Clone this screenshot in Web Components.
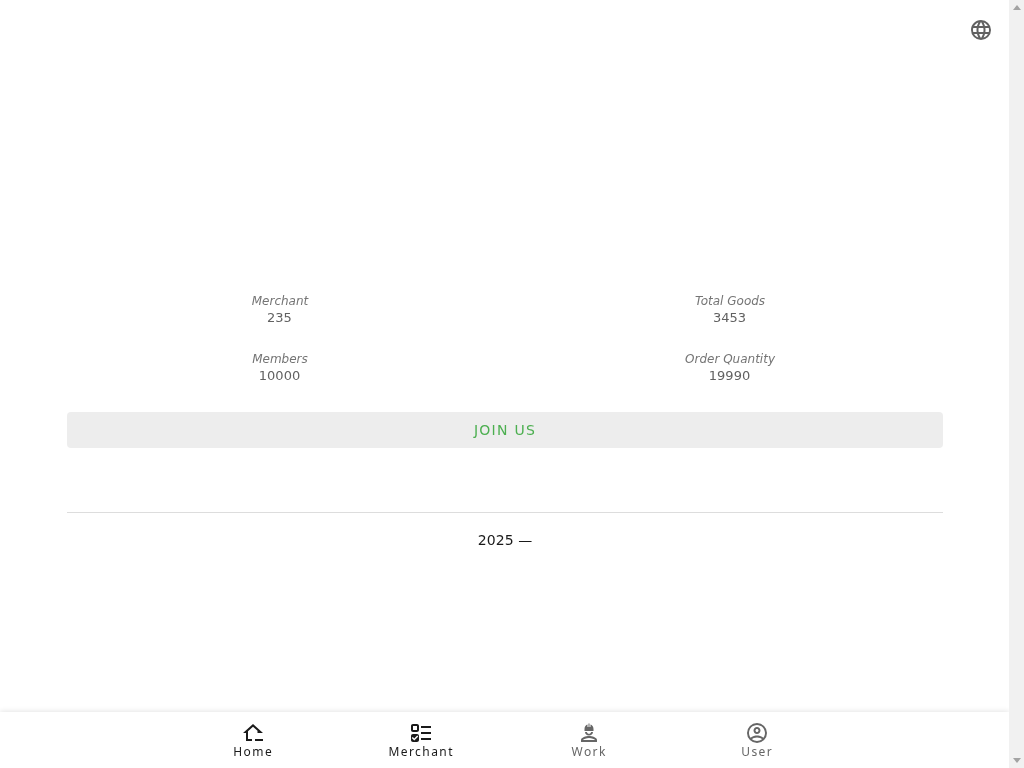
<!DOCTYPE html>
<html lang="en">
<head>
<meta charset="utf-8">
<title>Home</title>
<style>
    html { overflow: hidden; }
    body {
        margin: 0;
        padding-right: 15px;
        background: #fff;
        font-family: "DejaVu Sans", sans-serif;
    }
</style>
</head>
<body>
<home-page></home-page>
<bottom-nav></bottom-nav>
<scroll-rail></scroll-rail>

<script>
const ICONS = {
    web: "M16.36,14C16.44,13.34 16.5,12.68 16.5,12C16.5,11.32 16.44,10.66 16.36,10H19.74C19.9,10.64 20,11.31 20,12C20,12.69 19.9,13.36 19.74,14M14.59,19.56C15.19,18.45 15.65,17.25 15.97,16H18.92C17.96,17.65 16.43,18.93 14.59,19.56M14.34,14H9.66C9.56,13.34 9.5,12.68 9.5,12C9.5,11.32 9.56,10.65 9.66,10H14.34C14.43,10.65 14.5,11.32 14.5,12C14.5,12.68 14.43,13.34 14.34,14M12,19.96C11.17,18.76 10.5,17.43 10.09,16H13.91C13.5,17.43 12.83,18.76 12,19.96M8,8H5.08C6.03,6.34 7.57,5.06 9.4,4.44C8.8,5.55 8.35,6.75 8,8M5.08,16H8C8.35,17.25 8.8,18.45 9.4,19.56C7.57,18.93 6.03,17.65 5.08,16M4.26,14C4.1,13.36 4,12.69 4,12C4,11.31 4.1,10.64 4.26,10H7.64C7.56,10.66 7.5,11.32 7.5,12C7.5,12.68 7.56,13.34 7.64,14M12,4.03C12.83,5.23 13.5,6.57 13.91,8H10.09C10.5,6.57 11.17,5.23 12,4.03M18.92,8H15.97C15.65,6.75 15.19,5.55 14.59,4.44C16.43,5.07 17.96,6.34 18.92,8M12,2C6.47,2 2,6.5 2,12A10,10 0 0,0 12,22A10,10 0 0,0 22,12A10,10 0 0,0 12,2Z",
    home: "M12 3L2 12H5V20H11V18H7V10.19L12 5.69L16.5 9.74V12H22ZM14 18V20H22V18Z",
    merchant: "M4 13C2.89 13 2 13.89 2 15V19C2 20.11 2.89 21 4 21H8C9.11 21 10 20.11 10 19V15C10 13.89 9.11 13 8 13M8.2 14.5L9.26 15.55L5.27 19.5L2.74 16.95L3.81 15.9L5.28 17.39M4 3C2.89 3 2 3.89 2 5V9C2 10.11 2.89 11 4 11H8C9.11 11 10 10.11 10 9V5C10 3.89 9.11 3 8 3M4 5H8V9H4M12 5H22V7H12M12 19V17H22V19M12 11H22V13H12Z",
    work: "M12 15C9 15 4 16.5 4 19V21H20V19C20 16.5 15 15 12 15ZM12 17C14.5 17 17.5 18 18 19H6C6.5 18 9.5 17 12 17ZM8 11H10C10 12 10.9 12.8 12 12.8S14 12 14 11H16C16 13 14.2 14.5 12 14.5S8 13 8 11ZM7.5 10V8C7.5 5.5 9 4 10.5 3.5V6H11.5V2.5H12.5V6H13.5V3.5C15 4 16.5 5.5 16.5 8V10Z",
    user: "M12 2A10 10 0 0 0 2 12A10 10 0 0 0 12 22A10 10 0 0 0 22 12A10 10 0 0 0 12 2ZM7.07 18.28C7.5 17.38 10.12 16.5 12 16.5S16.5 17.38 16.93 18.28C15.57 19.36 13.86 20 12 20S8.43 19.36 7.07 18.28ZM18.36 16.83C16.93 15.09 13.46 14.5 12 14.5S7.07 15.09 5.64 16.83C4.62 15.5 4 13.82 4 12C4 7.59 7.59 4 12 4S20 7.59 20 12C20 13.82 19.38 15.5 18.36 16.83ZM12 6C10.06 6 8.5 7.56 8.5 9.5S10.06 13 12 13S15.5 11.44 15.5 9.5S13.94 6 12 6ZM12 11C11.17 11 10.5 10.33 10.5 9.5S11.17 8 12 8S13.5 8.67 13.5 9.5S12.83 11 12 11Z"
};

class AppIcon extends HTMLElement {
    connectedCallback() {
        this.attachShadow({mode: "open"}).innerHTML = `
            <style>
                :host { display: block; width: 24px; height: 24px; }
                svg { display: block; fill: currentColor; }
            </style>
            <svg width="24" height="24" viewBox="0 0 24 24"><path d="${ICONS[this.getAttribute("name")]}"/></svg>`;
    }
}
customElements.define("app-icon", AppIcon);

class StatItem extends HTMLElement {
    connectedCallback() {
        this.attachShadow({mode: "open"}).innerHTML = `
            <style>
                :host {
                    display: block;
                    text-align: center;
                    font-size: 13px;
                    line-height: 17px;
                    color: #616161;
                    padding-bottom: 25px;
                }
                em { display: block; font-size: 12px; color: #757575; }
                div { margin-top: -1px; padding-right: 1px; }
            </style>
            <em>${this.getAttribute("label")}</em>
            <div>${this.getAttribute("value")}</div>`;
    }
}
customElements.define("stat-item", StatItem);

class HomePage extends HTMLElement {
    constructor() {
        super();
        this.attachShadow({mode: "open"}).innerHTML = `
            <style>
                :host { display: block; height: 768px; will-change: opacity; }
                .lang { position: absolute; top: 18px; right: 31px; color: #616161; }
                main { padding: 293px 66px 0 67px; }
                .stats {
                    display: grid;
                    grid-template-columns: 1fr 1fr;
                    margin: 0 -12px;
                }
                .join {
                    height: 36px;
                    margin-top: 3px;
                    display: flex;
                    align-items: center;
                    justify-content: center;
                    background: #ededed;
                    border-radius: 4px;
                    color: #4caf50;
                    font-size: 14px;
                    letter-spacing: 1.25px;
                }
                hr {
                    border: 0;
                    border-top: 1px solid #ddd;
                    margin: 64px 0 0;
                }
                footer {
                    padding-top: 18px;
                    text-align: center;
                    font-size: 14px;
                    line-height: 18px;
                    letter-spacing: 0.1px;
                    color: #1a1a1a;
                }
            </style>
            <div class="lang"><app-icon name="web"></app-icon></div>
            <main>
                <div class="stats">
                    <stat-item label="Merchant" value="235"></stat-item>
                    <stat-item label="Total Goods" value="3453"></stat-item>
                    <stat-item label="Members" value="10000"></stat-item>
                    <stat-item label="Order Quantity" value="19990"></stat-item>
                </div>
                <div class="join">JOIN US</div>
                <hr>
                <footer>2025 —</footer>
            </main>`;
    }
}
customElements.define("home-page", HomePage);

class NavItem extends HTMLElement {
    connectedCallback() {
        this.attachShadow({mode: "open"}).innerHTML = `
            <style>
                :host {
                    display: flex;
                    flex-direction: column;
                    align-items: center;
                    width: 168px;
                    padding-top: 9px;
                    color: #666;
                    font-family: "Noto Sans", sans-serif;
                    font-size: 12px;
                    line-height: 14px;
                    letter-spacing: 1.44px;
                }
                :host([active]) { color: #1a1a1a; }
                span { padding-left: 1.4px; }
            </style>
            <app-icon name="${this.getAttribute("icon")}"></app-icon>
            <span><slot></slot></span>`;
    }
}
customElements.define("nav-item", NavItem);

class BottomNav extends HTMLElement {
    constructor() {
        super();
        this.attachShadow({mode: "open"}).innerHTML = `
            <style>
                :host {
                    position: fixed;
                    left: 0;
                    right: 15px;
                    bottom: 0;
                    height: 56px;
                    background: #fff;
                    box-shadow: 0 -1px 5px rgba(0, 0, 0, 0.1);
                }
                nav { display: flex; justify-content: center; will-change: opacity; }
            </style>
            <nav>
                <nav-item icon="home" active>Home</nav-item>
                <nav-item icon="merchant" active>Merchant</nav-item>
                <nav-item icon="work">Work</nav-item>
                <nav-item icon="user">User</nav-item>
            </nav>`;
    }
}
customElements.define("bottom-nav", BottomNav);

// the reference shows a classic disabled scrollbar, headless hides the real one
class ScrollRail extends HTMLElement {
    constructor() {
        super();
        this.attachShadow({mode: "open"}).innerHTML = `
            <style>
                :host {
                    position: fixed;
                    top: 0;
                    right: 0;
                    bottom: 0;
                    width: 15px;
                    display: flex;
                    flex-direction: column;
                    justify-content: space-between;
                    align-items: center;
                    padding: 5px 0;
                    box-sizing: border-box;
                    background: #f1f1f1;
                }
                i {
                    border-left: 4px solid transparent;
                    border-right: 4px solid transparent;
                }
                .up { border-bottom: 5px solid #a3a3a3; }
                .down { border-top: 5px solid #a3a3a3; }
            </style>
            <i class="up"></i>
            <i class="down"></i>`;
    }
}
customElements.define("scroll-rail", ScrollRail);
</script>
</body>
</html>
